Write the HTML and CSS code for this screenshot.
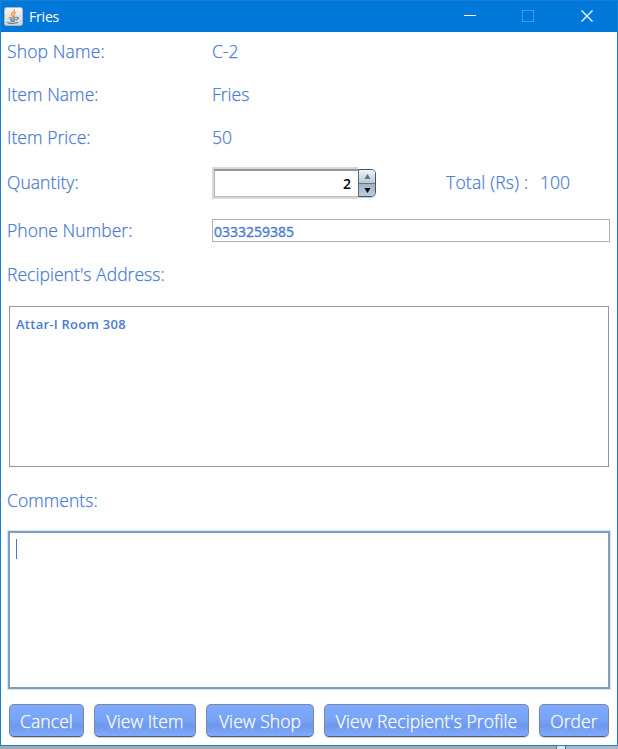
FILE: index.html
```html
<!DOCTYPE html>
<html lang="en">
<head>
<meta charset="utf-8">
<title>Fries</title>
<link rel="stylesheet" href="styles.css">
</head>
<body>
<div class="window">
  <header class="titlebar">
    <svg class="app-icon" width="19" height="19" viewBox="0 0 19 19">
      <defs><linearGradient id="tile" x2="0" y2="1"><stop stop-color="#f8f8f8"/><stop offset="1" stop-color="#d2d2d2"/></linearGradient></defs>
      <rect x=".5" y=".5" width="18" height="18" rx="2" fill="url(#tile)" stroke="#b5b5b0"/>
      <path d="M10.500 2.500C11.500 5 7 5.500 7.500 7.500 8 9 9 9.500 9 10.500M12 5.500C9.500 6.500 9.500 7.500 10.300 8.500 10.800 9.500 10 10 9.500 10.500" fill="none" stroke="#ed8b35" stroke-width="1.300"/>
      <path d="M5 10.500Q8.500 12 12 10.500M12 10.500C15.500 9.500 15 12 12 13M6 12.500Q8.500 13.500 11.500 12.500M6.500 14Q8.500 15 11 14M3.500 15C4 17 12.500 16.800 14 15.200" fill="none" stroke="#5b829e" stroke-width="1.100"/>
    </svg>
    <span class="title">Fries</span>
    <svg class="controls" width="138" height="31" viewBox="0 0 138 31" fill="none" shape-rendering="crispEdges">
      <path d="M0 14.500H12" stroke="#fff"/>
      <rect x="58.500" y="9.500" width="11" height="11" stroke="#3d99e3"/>
      <path d="M117.500 9.500L128.500 20.500M128.500 9.500L117.500 20.500" stroke="#fff" stroke-width="1.200" shape-rendering="auto"/>
    </svg>
  </header>
  <main class="form">
    <div class="row first"><label>Shop Name:</label><span>C-2</span></div>
    <div class="row"><label>Item Name:</label><span>Fries</span></div>
    <div class="row"><label>Item Price:</label><span>50</span></div>
    <div class="row tall">
      <label>Quantity:</label>
      <div class="spinner">
        <div class="amount">2</div>
        <div class="steps">
          <i><svg width="7" height="5"><path d="M3.500 0L6.500 5H.5z" fill="#6b6e72"/></svg></i>
          <i class="down"><svg width="7" height="5"><path d="M.5 0h6L3.500 5z" fill="#050505"/></svg></i>
        </div>
      </div>
      <span class="total">Total (Rs) :</span><span class="sum">100</span>
    </div>
    <div class="row tall"><label>Phone Number:</label><div class="field">0333259385</div></div>
    <div class="row heading"><label>Recipient's Address:</label></div>
    <div class="area"><span>Attar-I Room 308</span></div>
    <div class="row heading comments"><label>Comments:</label></div>
    <div class="area focused"><i class="caret"></i></div>
    <div class="buttons">
      <button class="cancel">Cancel</button>
      <button class="item">View Item</button>
      <button class="shop">View Shop</button>
      <button class="profile">View Recipient's Profile</button>
      <button class="order">Order</button>
    </div>
  </main>
</div>
<footer class="behind"><i></i><b></b></footer>
</body>
</html>
```
FILE: styles.css
```css
* { box-sizing: border-box; }
body { margin: 0; width: 618px; height: 749px; overflow: hidden; background: #fff; color: #4b7bd1; font: 300 17.5px/24px "Open Sans", "Noto Sans", sans-serif; -webkit-text-stroke: .25px currentColor; }
.window { height: 746px; border: 1px solid #1980d5; background: #fff; }
.titlebar { height: 31px; display: flex; align-items: center; background: #0078d9; padding-left: 3px; color: #fff; -webkit-text-stroke: 0; }
.app-icon { margin: -1px 6px 0 0; }
.title { font-size: 14px; font-weight: 400; letter-spacing: -.2px; }
.controls { margin-left: auto; margin-right: 15px; }
.form { padding: 0 7px 0 6px; }
.row { height: 43px; display: flex; align-items: center; padding-bottom: 2px; white-space: nowrap; }
.row.first { height: 41px; padding-bottom: 3px; }
.row.tall { height: 48px; }
.row.heading { height: 40px; }
.row.comments { margin-top: 14px; }
label { width: 205px; letter-spacing: .05px; }
.first label { letter-spacing: .15px; }
.spinner { width: 164px; height: 32px; display: flex; align-items: flex-start; position: relative; top: 1px; }
.amount { width: 146px; height: 32px; border: 2px solid #d5d9e0; border-right: 0; box-shadow: inset 0 2px #949494, inset 1px 0 #b5b5b5, inset 0 -1px #bdbdbd; color: #000; font-size: 14px; font-weight: 600; line-height: 29px; text-align: right; padding-right: 7px; -webkit-text-stroke: 0; }
.steps { width: 18px; height: 28px; margin-top: 2px; border: 1px solid #3e566e; border-left-color: #526a80; border-radius: 0 5px 5px 0; overflow: hidden; box-shadow: 0 1px #ccc; }
.steps i { height: 13px; display: flex; align-items: center; justify-content: center; background: linear-gradient(#f1f4f7, #b9c7d4); }
.steps .down { border-top: 1px solid #60758a; background: linear-gradient(#a0b4c7, #bacddf); }
.total { margin-left: 70px; width: 94px; letter-spacing: .2px; }
.field { width: 398px; height: 23px; border: 1px solid #afafaf; padding-left: 1px; font-size: 14px; font-weight: 400; line-height: 23px; -webkit-text-stroke: .4px currentColor; }
.area { height: 161px; margin: 11px 1px 0 2px; border: 1px solid #9494a2; padding: 5px 6px; font-size: 13px; font-weight: 600; letter-spacing: .25px; -webkit-text-stroke: 0; }
.area.focused { height: 158px; margin: 10px 0 0 1px; border: 2px solid #7a9fc8; border-right-color: #819ebd; border-bottom-color: #819ebd; box-shadow: 0 0 0 1px #d3e3f0; }
.caret { display: block; width: 1px; height: 20px; margin-top: 1px; background: #4577d3; }
.buttons { display: flex; gap: 10px; margin: 15px 0 0 2px; }
button { height: 33px; padding: 1px 0 0; border: 1px solid #7b889f; border-bottom-color: #555a66; border-radius: 5px; background: linear-gradient(#7eaaff, #78a4f8 45%, #6d98ec 67%, #7faaff); box-shadow: 0 1px 1px #ccc; color: #fff; font: inherit; letter-spacing: .08px; white-space: nowrap; }
.cancel { width: 75px; }
.item { width: 102px; }
.shop { width: 108px; }
.profile { width: 205px; }
.order { width: 70px; }
.behind { height: 3px; display: flex; justify-content: flex-end; background: #aaa; }
.behind i { width: 9px; background: #e5e5e5; border-left: 1px solid #777; }
.behind b { width: 53px; background: #aeb9c8; border-left: 1px solid #2872b4; }
```
